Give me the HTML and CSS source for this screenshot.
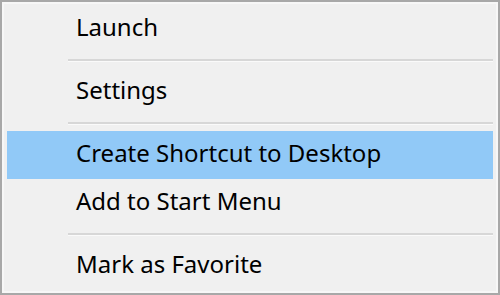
FILE: index.html
```html
<!DOCTYPE html>
<html lang="en">
<head>
<meta charset="utf-8">
<title>Context menu</title>
<link rel="stylesheet" href="styles.css">
</head>
<body>
<div class="menu" role="menu">
  <div class="item" role="menuitem"><span class="label">Launch</span></div>
  <div class="sep" role="separator"></div>
  <div class="item" role="menuitem"><span class="label">Settings</span></div>
  <div class="sep" role="separator"></div>
  <div class="item active" role="menuitem"><span class="label">Create Shortcut to Desktop</span></div>
  <div class="item" role="menuitem"><span class="label">Add to Start Menu</span></div>
  <div class="sep" role="separator"></div>
  <div class="item" role="menuitem"><span class="label">Mark as Favorite</span></div>
</div>
</body>
</html>
```

FILE: styles.css
```css
html, body {
  margin: 0;
  padding: 0;
  background: #f0f0f0;
}
.menu {
  box-sizing: border-box;
  width: 500px;
  height: 295px;
  border: 2px solid #a8a8a8;
  background: #f0f0f0;
  box-shadow: inset 0 0 0 2px #f7f7f7;
  padding: 3px 5px 0 5px;
  display: flex;
  flex-direction: column;
  font-family: "Noto Sans", "Open Sans", sans-serif;
  font-size: 24px;
  color: #000;
}
.item {
  height: 48px;
  display: flex;
  align-items: center;
  padding-left: 69px;
  flex-shrink: 0;
}
.item .label {
  position: relative;
  top: -3px;
}
.item.active {
  background: #91c9f7;
}
.sep {
  height: 15px;
  flex-shrink: 0;
  margin-left: 61px;
  display: flex;
  flex-direction: column;
  justify-content: center;
}
.sep::before {
  content: "";
  display: block;
  height: 2px;
  background: #d7d7d7;
  border-bottom: 1px solid #fafafa;
}
```
